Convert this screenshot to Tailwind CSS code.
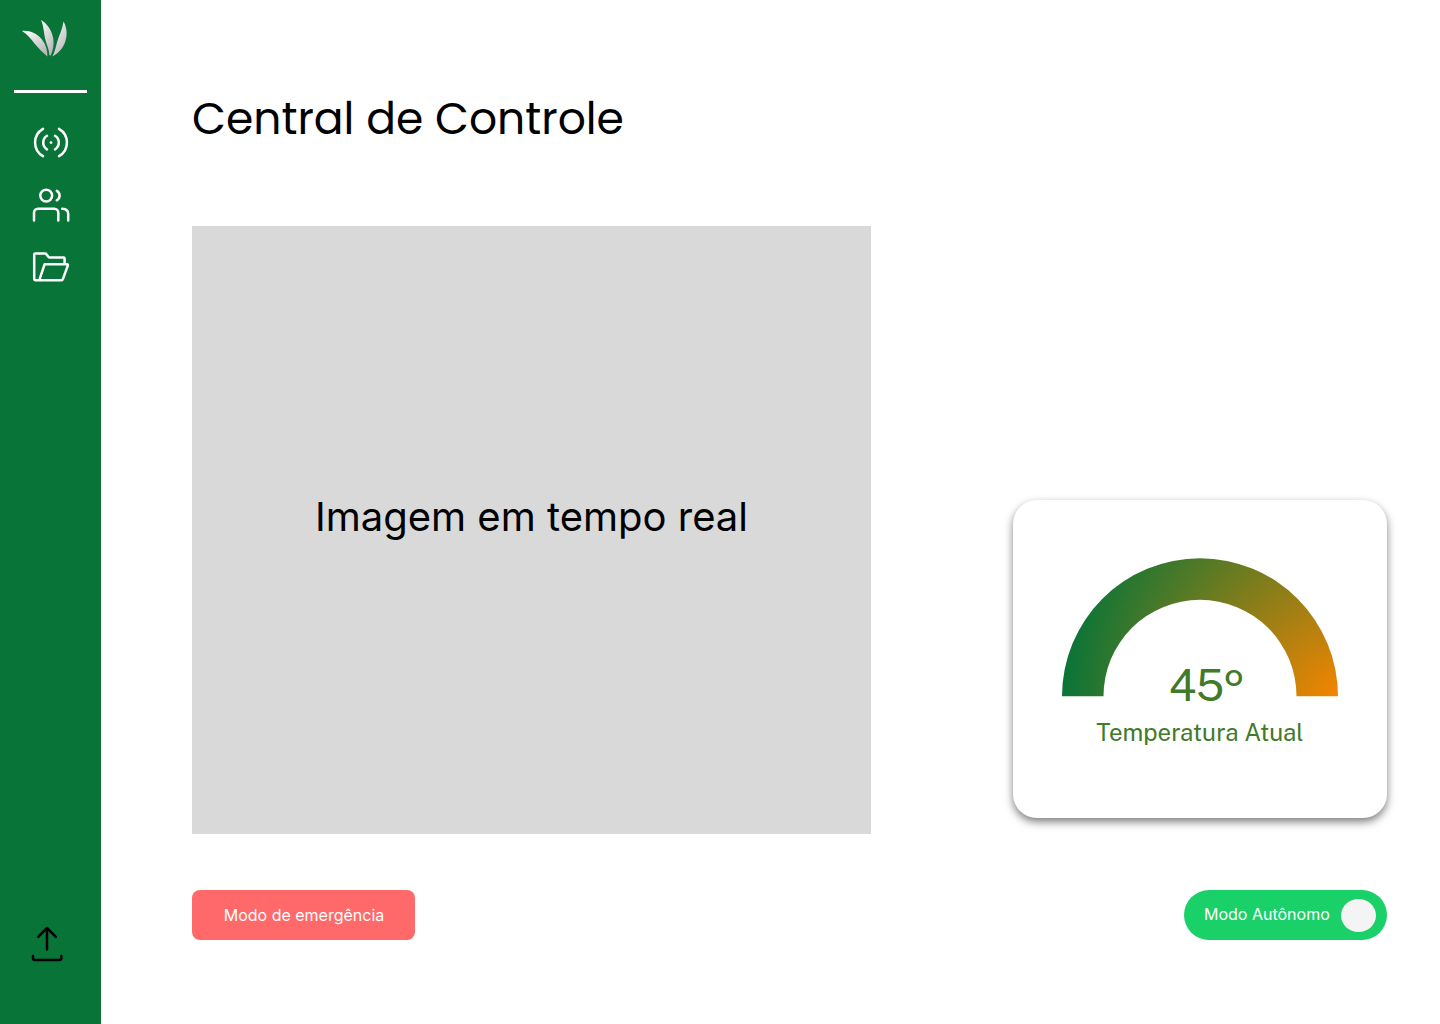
<!DOCTYPE html>
<html lang="pt-BR">
<head>
<meta charset="utf-8">
<meta name="viewport" content="width=device-width, initial-scale=1">
<title>Central de Controle</title>
<script src="https://cdn.jsdelivr.net/npm/@tailwindcss/browser@4"></script>
</head>
<body class="flex min-h-screen bg-white font-['Inter',sans-serif] text-black">
<aside class="flex w-[101px] shrink-0 flex-col items-center bg-[#087438] pt-4 pb-14">
  <a href="#" aria-label="Início">
    <svg class="block h-11 w-[61px]" viewBox="20 16 61 44">
      <defs><linearGradient id="leaf" x1="0" y1="0" x2="0.6" y2="1"><stop offset="0" stop-color="#fff"/><stop offset="1" stop-color="#b9b9b9"/></linearGradient></defs>
      <g fill="url(#leaf)">
        <path d="M22 31C29 30 37 33.500 42 39.500C46 44.500 47.600 50.500 47.400 56.600C43 52.500 38.500 48.500 34.500 43.500C30.500 38.500 27 34 22 31Z"/>
        <path d="M41 20C47.500 23.500 52 31 53.300 38.500C54.200 44.500 53 50.500 50.700 55.600L49.400 55.200C49.300 50 47 45.500 45.600 40.500C43.900 34 43.800 26 41 20Z"/>
        <path d="M63.500 21.500C67 27.500 67.700 35.500 65 42.500C62.500 49 58 53.500 52.300 56.600C54.700 52 55.700 47.500 57 42.500C59 35.500 62.600 29 63.500 21.500Z"/>
      </g>
    </svg>
  </a>
  <hr class="mt-[30px] h-[3px] w-[73px] border-0 bg-white">
  <nav class="mt-[29px] flex flex-col gap-[22px]">
    <a href="#" aria-label="Transmissão">
      <svg class="block size-[41px]" viewBox="30 122 41 41" fill="none" stroke="#fff" stroke-width="2.500" stroke-linecap="round" stroke-linejoin="round"><path d="M43 128.800A15.800 15.800 0 0 0 43 156.200M59 128.800A15.800 15.800 0 0 1 59 156.200M47 135.800A8 8 0 0 0 47 149.400M55 135.800A8 8 0 0 1 55 149.400"/><circle cx="51" cy="142.600" r="1.400" fill="#fff" stroke="none"/></svg>
    </a>
    <a href="#" aria-label="Usuários">
      <svg class="block size-[41px]" viewBox="30 185 41 41" fill="none" stroke="#fff" stroke-width="2.500" stroke-linecap="round" stroke-linejoin="round"><circle cx="46.200" cy="195.600" r="5.900"/><path d="M34 220.400V212.800A4 4 0 0 1 38 208.800H54.300A4 4 0 0 1 58.300 212.800V220.400M62.200 208.800Q68.200 209.200 68.200 214V220.400M56.800 190.900Q59.600 192.400 59.600 195.600T56.800 200.300"/></svg>
    </a>
    <a href="#" aria-label="Arquivos">
      <svg class="block size-[41px]" viewBox="30 248 41 41" fill="none" stroke="#fff" stroke-width="2.500" stroke-linecap="round" stroke-linejoin="round"><path d="M39.200 280.300L44.600 264.300H67Q68.200 264.300 67.800 265.600L62.900 279.200Q62.500 280.300 61.300 280.300H35.400Q34.200 280.300 34.200 279.100V254.800Q34.200 253.600 35.400 253.600H45Q46 253.600 46.600 254.500L48.300 256.700Q49 257.600 50 257.600H63.600Q64.600 257.600 64.600 258.600V264.300"/></svg>
    </a>
  </nav>
  <a href="#" aria-label="Enviar" class="mt-auto">
    <svg class="block h-11 w-[41px]" viewBox="30 924 41 44" fill="none" stroke="#000" stroke-width="2.500" stroke-linecap="round" stroke-linejoin="round"><path d="M47 949.500V928.500M38.200 936.800L47 928L55.800 936.800M33 956V958Q33 960 35 960H59.300Q61.300 960 61.300 958V956"/></svg>
  </a>
</aside>
<main class="min-w-0 flex-1 pt-[86px] pr-[53px] pb-[84px] pl-[91px]">
  <h1 class="font-['Poppins','Inter',sans-serif] text-[44px] leading-[66px]">Central de Controle</h1>
  <div class="mt-[74px] flex items-end justify-between gap-8">
    <section class="flex h-[608px] max-w-[679px] flex-1 items-center justify-center bg-[#d9d9d9] pb-[26px]">
      <p class="text-[40px] leading-[50px]">Imagem em tempo real</p>
    </section>
    <section class="mb-4 flex h-[318px] w-[374px] shrink-0 flex-col items-center rounded-3xl bg-white pt-[58px] text-[#417a28] shadow-[0_4px_8px_rgba(0,0,0,0.5)]">
      <div class="relative">
        <svg class="block h-[139px] w-[276px]" viewBox="0 0 276 139">
          <defs><radialGradient id="heat" gradientUnits="userSpaceOnUse" cx="276" cy="138" r="276"><stop offset="0" stop-color="#f48500"/><stop offset="1" stop-color="#087438"/></radialGradient></defs>
          <path fill="url(#heat)" d="M0 138.300A138 138 0 0 1 276 138.300H234.500A96.500 96.500 0 0 0 41.500 138.300Z"/>
        </svg>
        <p class="absolute inset-x-0 bottom-[-16px] pl-3 text-center font-['Public_Sans','Liberation_Sans',sans-serif] text-[44px] leading-[54px]">45<span class="font-['Poppins','Inter',sans-serif]">º</span></p>
      </div>
      <p class="mt-5 font-['Public_Sans','Liberation_Sans',sans-serif] text-[24px] leading-[30px]">Temperatura Atual</p>
    </section>
  </div>
  <div class="mt-14 flex justify-between">
    <button type="button" class="h-[50px] w-[223px] rounded-lg bg-[#ff6969] pl-px text-base text-white">Modo de emergência</button>
    <label class="flex h-[50px] w-[203px] items-center justify-between rounded-full bg-[#1ad069] pr-[11px] pl-5 text-base text-white">
      <span class="pb-0.5">Modo Autônomo</span>
      <input type="checkbox" role="switch" checked class="h-[33px] w-[35px] appearance-none rounded-[50%] bg-[#f4f4f4]">
    </label>
  </div>
</main>
</body>
</html>
